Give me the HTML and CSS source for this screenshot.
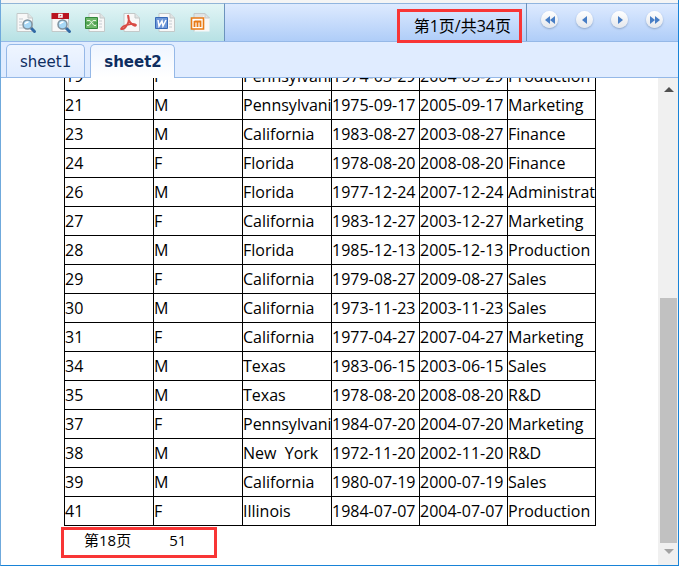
FILE: index.html
```html
<!DOCTYPE html>
<html lang="zh-CN">
<head>
<meta charset="utf-8">
<title>Report</title>
<link rel="stylesheet" href="styles.css">
</head>
<body>
<div class="window">
  <header class="toolbar">
    <div class="exports">
      <button type="button" class="tool" aria-label="Preview"><svg viewBox="0 0 22 22"><path class="sheet" d="M2 1.500H13L17.500 6V19.500H2z"/><path class="fold" d="M13 1.500V6H17.500"/><path class="ruled" d="M4 7H8M4 10H7M4 13H7M4 16H9"/><path class="handle" d="M16 16L19.500 19.500"/><circle class="lens" cx="12.500" cy="12.500" r="4.500"/><path class="glint" d="M10 12Q11 10 13.500 10"/></svg></button>
      <button type="button" class="tool" aria-label="PDF preview"><svg viewBox="0 0 22 22"><path class="sheet" d="M2 1.500H18.500V19.500H2z"/><path fill="#b81420" d="M1.500 1H19V7H1.500z"/><path fill="none" stroke="#fff" stroke-width="1.500" d="M9 6V2.500H12V5H10"/><path class="handle" d="M16 16L19.500 19.500"/><circle class="lens" cx="12.500" cy="12.500" r="4.500"/><path class="glint" d="M10 12Q11 10 13.500 10"/></svg></button>
      <button type="button" class="tool" aria-label="Excel"><svg viewBox="0 0 22 22"><path class="sheet" d="M4 1.500H15L19.500 6V19.500H4z"/><path class="fold" d="M15 1.500V6H19.500"/><path class="ruled" d="M14 9H17M14 12H17M14 15H17"/><path fill="#6db76a" stroke="#32883a" d="M.500 5.500H12.500V16.500H.500z"/><path fill="none" stroke="#e0f2dc" d="M2 8.500H5L9 13.500H11M11 8.500H8L4 13.500H2"/><path stroke="#32883a" d="M1 11H4M9 11H12"/></svg></button>
      <button type="button" class="tool" aria-label="PDF"><svg viewBox="0 0 22 22"><path class="sheet" d="M4 1.500H15L19.500 6V19.500H4z"/><path class="fold" d="M15 1.500V6H19.500"/><path fill="none" stroke="#d94b45" stroke-width="1.800" stroke-linejoin="round" d="M8 3Q10 8 7 13Q4 18 1 17Q2 14 8 12.500Q15 11 16 13Q15 15 12 12Q8 9 8 3"/></svg></button>
      <button type="button" class="tool" aria-label="Word"><svg viewBox="0 0 22 22"><path class="sheet" d="M4 1.500H15L19.500 6V19.500H4z"/><path class="fold" d="M15 1.500V6H19.500"/><path class="ruled" d="M14 9H17M14 12H17M14 15H17"/><path fill="#6d97d8" stroke="#3769b7" d="M.500 5.500H12.500V16.500H.500z"/><path fill="none" stroke="#fff" stroke-width="1.500" d="M3 8L4 14L7 9L8 14L11 8"/></svg></button>
      <button type="button" class="tool" aria-label="Word image"><svg viewBox="0 0 22 22"><path fill="#f8f8f8" d="M4 1.500H15L19.500 6V19.500H4z"/><path class="fold" d="M4 19.500V1.500H15L19.500 6H15V1.500"/><path fill="#fff" stroke="#e87a16" stroke-width="1.600" d="M1.500 6H13.500V17H1.500z"/><path fill="none" stroke="#e87a16" stroke-width="1.800" d="M4.500 15V9M4.500 9.500H10.500V15M7.500 9V15"/></svg></button>
    </div>
    <div class="status"><span class="count">第1页/共34页</span></div>
    <nav class="pager" aria-label="Pages">
      <button type="button" class="step" aria-label="First"><svg viewBox="0 0 10 8"><path d="M5 0V8L0 4zM10 0V8L5 4z"/></svg></button>
      <button type="button" class="step" aria-label="Previous"><svg viewBox="0 0 10 8"><path d="M7 0V8L2 4z"/></svg></button>
      <button type="button" class="step" aria-label="Next"><svg viewBox="0 0 10 8"><path d="M3 0V8L8 4z"/></svg></button>
      <button type="button" class="step" aria-label="Last"><svg viewBox="0 0 10 8"><path d="M0 0V8L5 4zM5 0V8L10 4z"/></svg></button>
    </nav>
  </header>
  <div class="tabs" role="tablist">
    <button type="button" class="tab" role="tab">sheet1</button>
    <button type="button" class="tab active" role="tab" aria-selected="true">sheet2</button>
  </div>
  <main class="viewer">
    <div class="page">
      <table class="report">
        <colgroup><col class="wide"><col class="wide"><col class="wide"><col><col><col></colgroup>
        <tbody>
        <tr><td>19</td><td>F</td><td>Pennsylvania</td><td>1974-03-29</td><td>2004-03-29</td><td>Production</td></tr>
        <tr><td>21</td><td>M</td><td>Pennsylvania</td><td>1975-09-17</td><td>2005-09-17</td><td>Marketing</td></tr>
        <tr><td>23</td><td>M</td><td>California</td><td>1983-08-27</td><td>2003-08-27</td><td>Finance</td></tr>
        <tr><td>24</td><td>F</td><td>Florida</td><td>1978-08-20</td><td>2008-08-20</td><td>Finance</td></tr>
        <tr><td>26</td><td>M</td><td>Florida</td><td>1977-12-24</td><td>2007-12-24</td><td>Administration</td></tr>
        <tr><td>27</td><td>F</td><td>California</td><td>1983-12-27</td><td>2003-12-27</td><td>Marketing</td></tr>
        <tr><td>28</td><td>M</td><td>Florida</td><td>1985-12-13</td><td>2005-12-13</td><td>Production</td></tr>
        <tr><td>29</td><td>F</td><td>California</td><td>1979-08-27</td><td>2009-08-27</td><td>Sales</td></tr>
        <tr><td>30</td><td>M</td><td>California</td><td>1973-11-23</td><td>2003-11-23</td><td>Sales</td></tr>
        <tr><td>31</td><td>F</td><td>California</td><td>1977-04-27</td><td>2007-04-27</td><td>Marketing</td></tr>
        <tr><td>34</td><td>M</td><td>Texas</td><td>1983-06-15</td><td>2003-06-15</td><td>Sales</td></tr>
        <tr><td>35</td><td>M</td><td>Texas</td><td>1978-08-20</td><td>2008-08-20</td><td>R&amp;D</td></tr>
        <tr><td>37</td><td>F</td><td>Pennsylvania</td><td>1984-07-20</td><td>2004-07-20</td><td>Marketing</td></tr>
        <tr><td>38</td><td>M</td><td>New&nbsp; York</td><td>1972-11-20</td><td>2002-11-20</td><td>R&amp;D</td></tr>
        <tr><td>39</td><td>M</td><td>California</td><td>1980-07-19</td><td>2000-07-19</td><td>Sales</td></tr>
        <tr><td>41</td><td>F</td><td>Illinois</td><td>1984-07-07</td><td>2004-07-07</td><td>Production</td></tr>
        </tbody>
      </table>
      <div class="totals"><span>第18页</span><span>51</span></div>
    </div>
    <div class="scrollbar" aria-hidden="true">
      <svg class="arrow" viewBox="0 0 10 5"><path fill="#505050" d="M5 0L10 5H0z"/></svg>
      <div class="track"><div class="thumb"></div></div>
      <svg class="arrow" viewBox="0 0 10 5"><path fill="#a3a3a3" d="M0 0H10L5 5z"/></svg>
    </div>
  </main>
</div>
</body>
</html>
```

FILE: styles.css
```css
* { box-sizing: border-box; }

body {
  margin: 0;
  background: #fff;
  color: #000;
  font: 16px/28px "Open Sans", "Noto Sans CJK SC", sans-serif;
}

button {
  margin: 0;
  padding: 0;
  border: 0;
  background: none;
}

.window {
  display: flex;
  flex-direction: column;
  height: 100vh;
  border: solid #1883d7;
  border-width: 0 1px 1px 0;
  border-left: 1px solid #6fa9dc;
}

.toolbar {
  display: flex;
  flex: none;
  height: 42px;
  border-top: 3px solid #f5f5f5;
  border-bottom: 1px solid #95b8e7;
  background: linear-gradient(#dfebff, #afcdf8);
  box-shadow: inset 0 1px #91b5df;
}

.exports {
  display: flex;
  align-items: center;
  gap: 13px;
  width: 224px;
  padding-left: 14px;
  border-top: 1px solid #91b5d7;
  border-right: 1px solid #6c93bd;
  background: linear-gradient(#e2f5f6, #b7e1e4);
}

.tool, .tool svg {
  display: block;
  width: 22px;
  height: 22px;
}

.sheet { fill: #f8f8f8; stroke: #c3c9c9; }
.fold { fill: #e1e3e3; stroke: #c3c9c9; }
.ruled { fill: none; stroke: #c5cbd0; }
.handle { stroke: #326aa5; stroke-width: 3; stroke-linecap: round; }
.lens { fill: #a7d8f6; stroke: #7e929f; stroke-width: 1.5; }
.glint { fill: none; stroke: #fff; stroke-width: 1.5; }

.status {
  display: flex;
  flex: 1;
  justify-content: flex-end;
  align-items: flex-start;
  padding: 6px 4px 0 0;
  border-right: 1px solid #6c93bd;
}

.count {
  position: relative;
  z-index: 1;
  height: 34px;
  padding: 0 8px 0 14px;
  border: 3px solid #f83535;
}

.pager {
  display: flex;
  gap: 18px;
  padding: 8px 15px 0 14px;
}

.step {
  display: flex;
  align-items: center;
  justify-content: center;
  width: 17px;
  height: 17px;
  border-radius: 50%;
  background: linear-gradient(#fff, #e4e7ec);
  box-shadow: 0 1px 2px #8ca4c5;
}

.step svg {
  width: 10px;
  height: 8px;
  fill: #477dc5;
}

.tabs {
  display: flex;
  flex: none;
  align-items: flex-end;
  gap: 5px;
  height: 36px;
  padding-left: 5px;
  border-bottom: 1px solid #95b8e7;
  background: #e0ecff;
}

.tab {
  height: 33px;
  padding: 0 13px;
  border: 1px solid #95b8e7;
  border-bottom: 0;
  border-radius: 5px 5px 0 0;
  background: linear-gradient(#eff5ff, #e0ecff);
  color: #0e2d5f;
  font: 15px/34px "DejaVu Sans", sans-serif;
}

.tab.active {
  height: 34px;
  margin-bottom: -1px;
  padding: 0 12px 0 13px;
  background: linear-gradient(#eff5ff, #fff);
  font-weight: bold;
}

.viewer {
  display: flex;
  flex: 1;
  min-height: 0;
}

.page {
  display: flex;
  flex: 1;
  flex-direction: column;
  justify-content: flex-end;
  align-items: center;
  overflow: hidden;
  padding: 0 0 7px 1px;
}

.report {
  flex: none;
  width: 532px;
  table-layout: fixed;
  border-collapse: collapse;
}

.report col { width: 88px; }
.report col.wide { width: 89px; }

.report td {
  height: 29px;
  padding: 0;
  overflow: hidden;
  border: 1px solid #000;
  white-space: nowrap;
}

.totals {
  display: flex;
  flex: none;
  gap: 38px;
  width: 156px;
  height: 31px;
  margin: 1px 382px 0 0;
  padding-left: 20px;
  border: 3px solid #f83535;
  font-size: 15px;
  line-height: 20px;
}

.scrollbar {
  display: flex;
  flex-direction: column;
  align-items: center;
  width: 20px;
  padding: 9px 1px 11px 2px;
  background: #f0f0f0;
}

.arrow {
  flex: none;
  width: 10px;
  height: 5px;
}

.track {
  display: flex;
  flex: 1;
  flex-direction: column;
  justify-content: flex-end;
  width: 17px;
  padding: 6px 0;
}

.thumb {
  height: 55%;
  background: #c1c1c1;
}
```
